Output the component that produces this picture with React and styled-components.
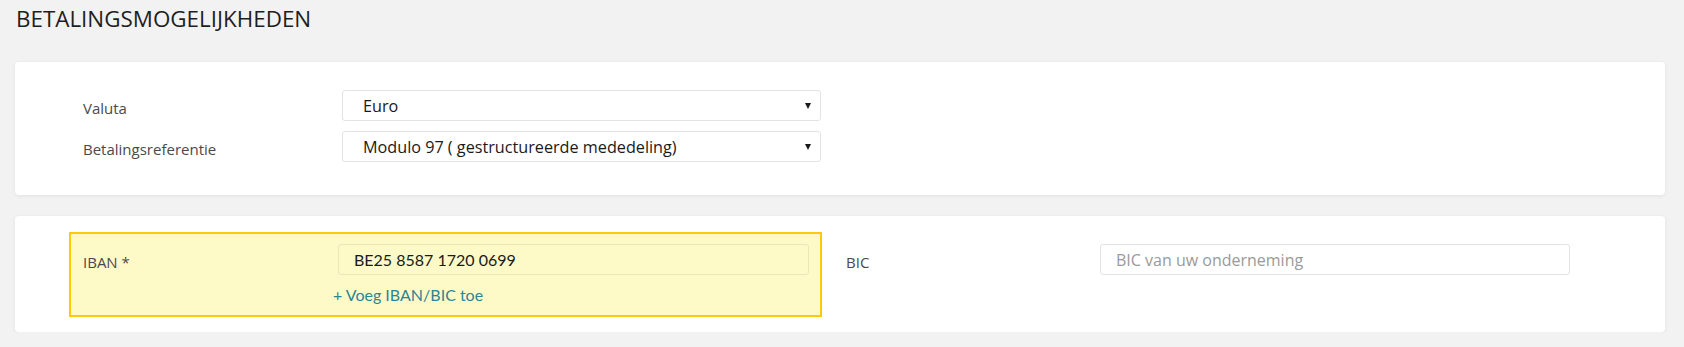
import React from "react";
import styled, { createGlobalStyle } from "styled-components";

const GlobalStyle = createGlobalStyle`
  html, body {
    margin: 0;
    padding: 0;
    background: #f2f2f2;
    font-family: "Open Sans", "Liberation Sans", sans-serif;
  }
`;

const Page = styled.div`
  padding: 0 19px 0 15px;
`;

const PageTitle = styled.h1`
  margin: 0;
  padding: 4px 0 0 1px;
  height: 62px;
  box-sizing: border-box;
  font-size: 22.4px;
  font-weight: 400;
  line-height: 30px;
  color: #1e1e1e;
`;

const Card = styled.section`
  background: #fff;
  border-radius: 4px;
  box-shadow: 0 1px 4px rgba(0, 0, 0, 0.07);
  box-sizing: border-box;
  margin-bottom: ${(p) => p.gap || 0}px;
  padding: ${(p) => p.pad};
`;

const FormGrid = styled.div`
  display: grid;
  grid-template-columns: 259px 479px;
  grid-auto-rows: 31px;
  row-gap: 10px;
`;

const Label = styled.label`
  font-size: 15px;
  color: #4a4a4a;
  padding-top: 6px;
  line-height: 25px;
  white-space: nowrap;
`;

const SelectBox = styled.div`
  height: 31px;
  box-sizing: border-box;
  border: 1px solid #e3e3e3;
  border-radius: 3px;
  background: #fff;
  display: flex;
  align-items: center;
  justify-content: space-between;
  padding: 0 9px 0 20px;
  font-size: 16.2px;
  color: #1a1a1a;
`;

const Caret = styled.span`
  width: 0;
  height: 0;
  border-left: 3.5px solid transparent;
  border-right: 3.5px solid transparent;
  border-top: 6px solid #1a1a1a;
`;

const BankRow = styled.div`
  display: flex;
  align-items: flex-start;
`;

const Highlight = styled.div`
  width: 753px;
  height: 85px;
  box-sizing: border-box;
  border: 2px solid #fdca08;
  background: #fdfac8;
  padding: 10px 11px 0 12px;
  display: grid;
  grid-template-columns: 255px 471px;
  grid-template-rows: 31px auto;
  row-gap: 9px;
`;

const TextInput = styled.input`
  height: 31px;
  width: 100%;
  box-sizing: border-box;
  border: 1px solid ${(p) => (p.tinted ? "#ebe6b6" : "#e3e3e3")};
  border-radius: 3px;
  background: ${(p) => (p.tinted ? "#fdfac8" : "#fff")};
  padding: 0 15px;
  font-family: ${(p) => (p.tinted ? "Lato" : "'Open Sans'")}, sans-serif;
  font-size: 16px;
  color: #1a1a1a;
  outline: none;
  &::placeholder {
    color: #9a9a9a;
  }
`;

const AddLink = styled.a`
  grid-column: 2;
  margin-left: -5px;
  font-family: Lato, "Open Sans", sans-serif;
  font-size: 16px;
  line-height: 22px;
  color: #2b8596;
  text-decoration: none;
  cursor: pointer;
`;

const SideField = styled.div`
  margin-left: 24px;
  padding-top: 12px;
  display: grid;
  grid-template-columns: 254px 470px;
`;

export default function App() {
  return (
    <>
      <GlobalStyle />
      <Page>
        <PageTitle>BETALINGSMOGELIJKHEDEN</PageTitle>
        <Card gap={21} pad="28px 0 33px 68px">
          <FormGrid>
            <Label>Valuta</Label>
            <SelectBox>
              <span>Euro</span>
              <Caret />
            </SelectBox>
            <Label>Betalingsreferentie</Label>
            <SelectBox>
              <span>Modulo 97 ( gestructureerde mededeling)</span>
              <Caret />
            </SelectBox>
          </FormGrid>
        </Card>
        <Card pad="16px 0 15px 54px">
          <BankRow>
            <Highlight>
              <Label>IBAN *</Label>
              <TextInput tinted readOnly value="BE25 8587 1720 0699" />
              <AddLink>+ Voeg IBAN/BIC toe</AddLink>
            </Highlight>
            <SideField>
              <Label>BIC</Label>
              <TextInput placeholder="BIC van uw onderneming" />
            </SideField>
          </BankRow>
        </Card>
      </Page>
    </>
  );
}
